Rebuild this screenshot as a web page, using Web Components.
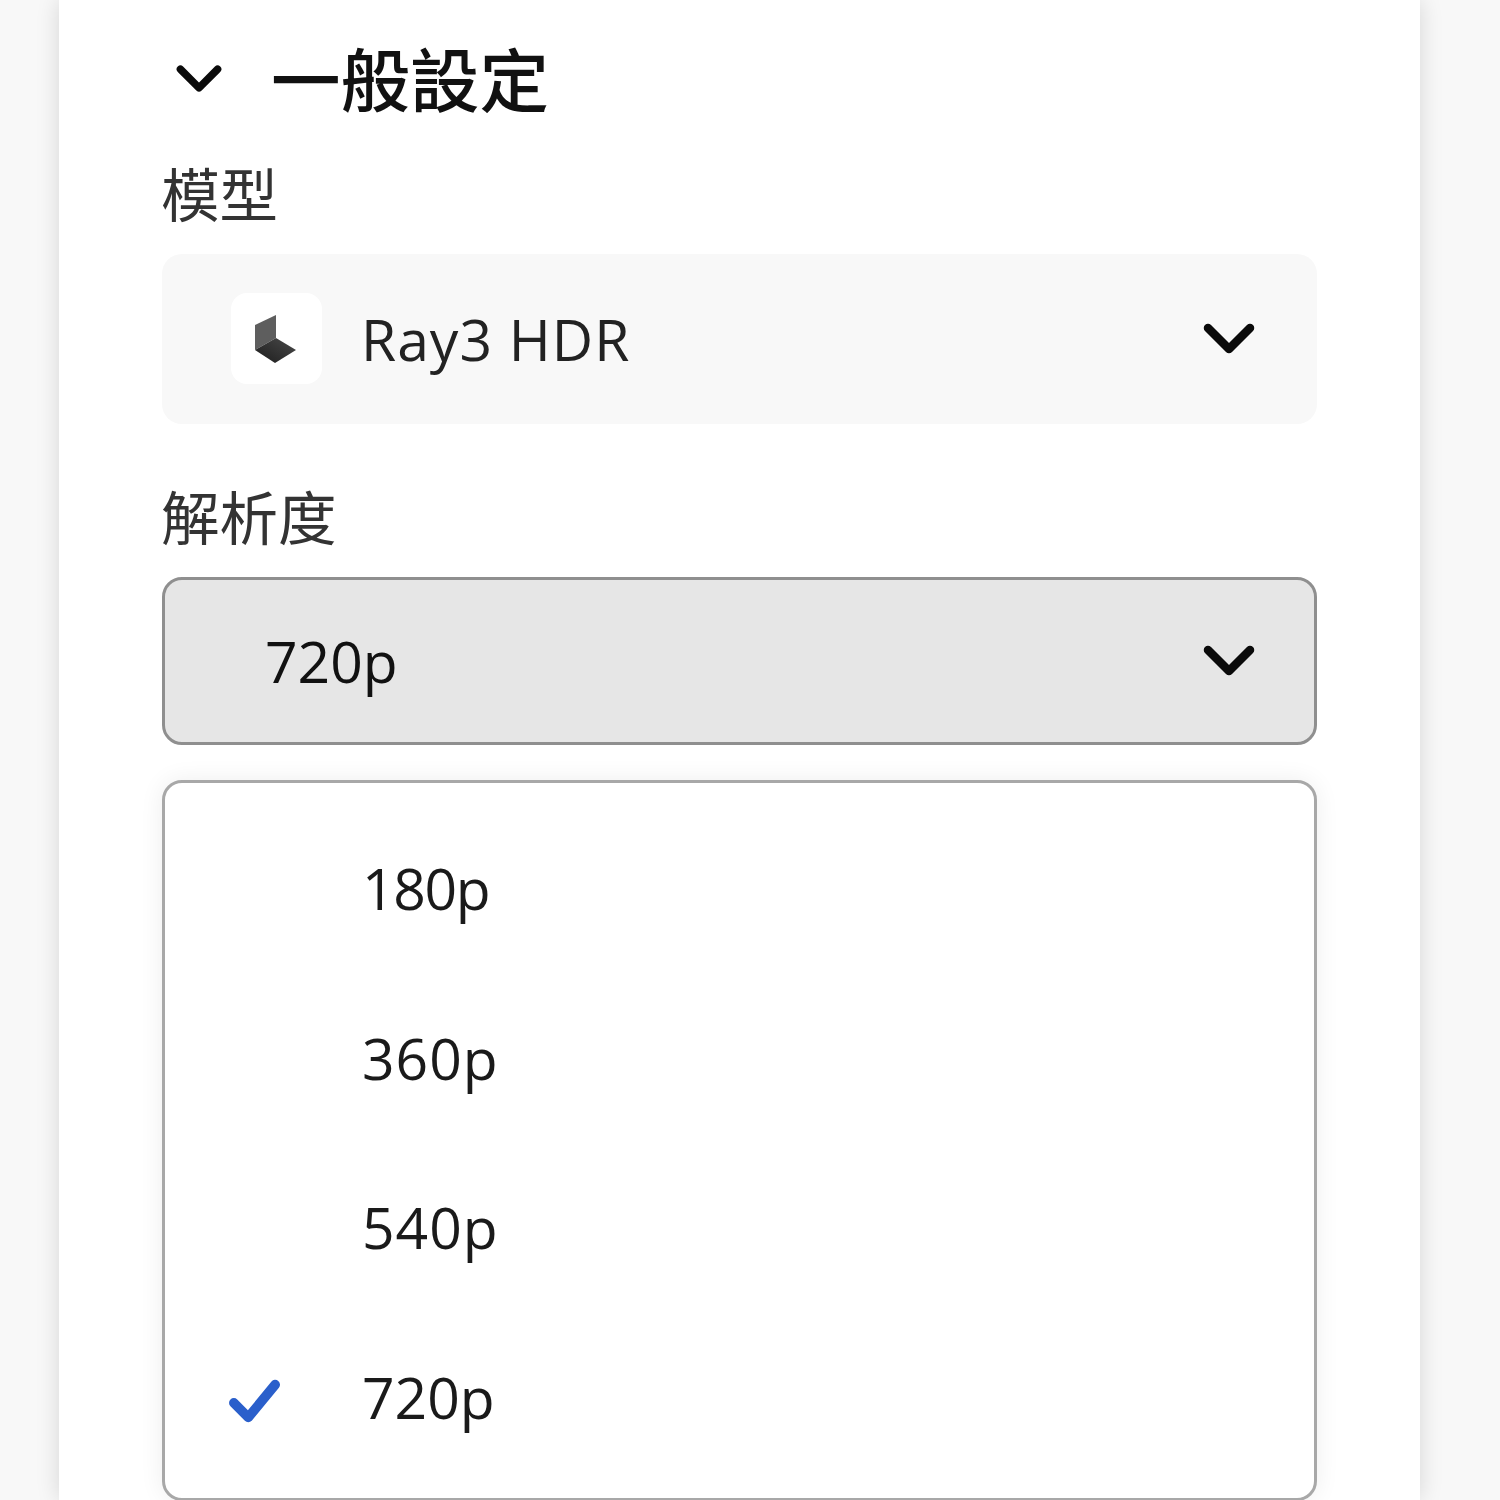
<!DOCTYPE html>
<html lang="zh-Hant">
<head>
<meta charset="utf-8">
<title>一般設定</title>
<style>
    html, body { margin: 0; height: 1500px; overflow: hidden; background: #f8f8f8; }
    body { font-family: "Open Sans", "Noto Sans CJK TC", sans-serif; color: #1a1a1a; }
</style>
</head>
<body>

<template id="chevron-icon">
    <style>
        :host { display: block; width: var(--size, 52px); height: var(--size, 52px); }
        svg { display: block; width: 100%; height: 100%; }
    </style>
    <svg viewBox="0 0 52 52" fill="none" stroke="#0a0a0a" stroke-width="8.5" stroke-linecap="round" stroke-linejoin="round">
        <path d="M5 15 L26 36 L47 15"></path>
    </svg>
</template>

<template id="settings-panel">
    <style>
        :host {
            display: block;
            box-sizing: border-box;
            width: 1361px;
            height: 1500px;
            margin-left: 59px;
            padding: 0 103px;
            background: #fff;
            box-shadow: 0 0 22px rgba(0, 0, 0, .14);
            overflow: hidden;
        }
        header {
            display: flex;
            align-items: center;
            height: 164px;
        }
        chevron-icon { --size: 46px; margin: -6px 0 0 14px; }
        h2 {
            margin: -2px 0 0 49px;
            font: 500 69.5px/1 "Open Sans", "Noto Sans CJK TC", sans-serif;
            color: #111;
        }
    </style>
    <header>
        <chevron-icon></chevron-icon>
        <h2><slot name="title"></slot></h2>
    </header>
    <slot></slot>
</template>

<template id="field-block">
    <style>
        :host { display: block; }
        label {
            display: block;
            height: 90px;
            margin-left: -1px;
            font: 400 58.5px/60px "Open Sans", "Noto Sans CJK TC", sans-serif;
            color: #333;
        }
    </style>
    <label><slot name="label"></slot></label>
    <slot></slot>
</template>

<template id="select-box">
    <style>
        :host {
            display: flex;
            align-items: center;
            box-sizing: border-box;
            height: 170px;
            padding: 0 62px 0 69px;
            border-radius: 20px;
            background: #f8f8f8;
            font: 400 57px/1 "Open Sans", sans-serif;
            color: #222;
        }
        :host([open]) {
            height: 168px;
            padding-left: 100px;
            border: 3px solid #8f8f8f;
            padding-right: 59px;
            background: #e6e6e6;
            color: #111;
        }
        .text { flex: 1; }
        ::slotted([slot="icon"]) { margin: 0 39px 2px 0; }
        chevron-icon { --size: 52px; }
    </style>
    <slot name="icon"></slot>
    <span class="text"><slot></slot></span>
    <chevron-icon></chevron-icon>
</template>

<template id="model-logo">
    <style>
        :host {
            display: flex;
            align-items: center;
            justify-content: center;
            width: 91px;
            height: 91px;
            border-radius: 16px;
            background: #fff;
        }
        svg { display: block; width: 91px; height: 91px; }
    </style>
    <svg viewBox="0 0 91 91">
        <defs>
            <linearGradient id="floor" x1="0" y1="1" x2="1" y2="0">
                <stop offset="0" stop-color="#1c1c1c"></stop>
                <stop offset="1" stop-color="#4a4a4a"></stop>
            </linearGradient>
        </defs>
        <path d="M24 32 L45 22 L45 45 L24 57 Z" fill="#5e5e5e"></path>
        <path d="M24 57 L44 70 L65 57 L45 45 Z" fill="url(#floor)"></path>
    </svg>
</template>

<template id="option-menu">
    <style>
        :host {
            display: block;
            box-sizing: border-box;
            height: 721px;
            margin-top: 35px;
            padding: 21px 0 0;
            border: 3px solid #a8a8a8;
            border-radius: 20px;
            background: #fff;
            box-shadow: 0 0 24px rgba(0, 0, 0, .07);
        }
    </style>
    <slot></slot>
</template>

<template id="option-item">
    <style>
        :host {
            display: flex;
            align-items: center;
            height: 169.5px;
            padding-left: 63px;
            font: 400 57px/1 "Open Sans", sans-serif;
            color: #1a1a1a;
        }
        .mark { width: 134px; flex: none; }
        svg { display: none; width: 54px; height: 50px; margin-top: 8px; }
        :host([selected]) svg { display: block; }
    </style>
    <span class="mark">
        <svg viewBox="0 0 56 52" fill="none" stroke="#2a5fcb" stroke-width="10" stroke-linecap="round" stroke-linejoin="round">
            <path d="M6 28 L21 43 L49 9"></path>
        </svg>
    </span>
    <slot></slot>
</template>

<settings-panel>
    <span slot="title">一般設定</span>
    <field-block style="margin-bottom: 63px">
        <span slot="label">模型</span>
        <select-box>
            <model-logo slot="icon"></model-logo>
            <span style="letter-spacing: 1px">Ray3 HDR</span>
        </select-box>
    </field-block>
    <field-block>
        <span slot="label">解析度</span>
        <select-box open>720p</select-box>
    </field-block>
    <option-menu>
        <option-item style="letter-spacing: -1.3px">180p</option-item>
        <option-item style="letter-spacing: 1px">360p</option-item>
        <option-item style="letter-spacing: 1px">540p</option-item>
        <option-item selected>720p</option-item>
    </option-menu>
</settings-panel>

<script>
    // every element just clones its template into an open shadow root
    for (const name of ["chevron-icon", "settings-panel", "field-block", "select-box", "model-logo", "option-menu", "option-item"]) {
        customElements.define(
            name,
            class extends HTMLElement {
                constructor() {
                    super();
                    const template = document.getElementById(name);
                    this.attachShadow({ mode: "open" }).appendChild(template.content.cloneNode(true));
                }
            }
        );
    }
</script>
</body>
</html>
